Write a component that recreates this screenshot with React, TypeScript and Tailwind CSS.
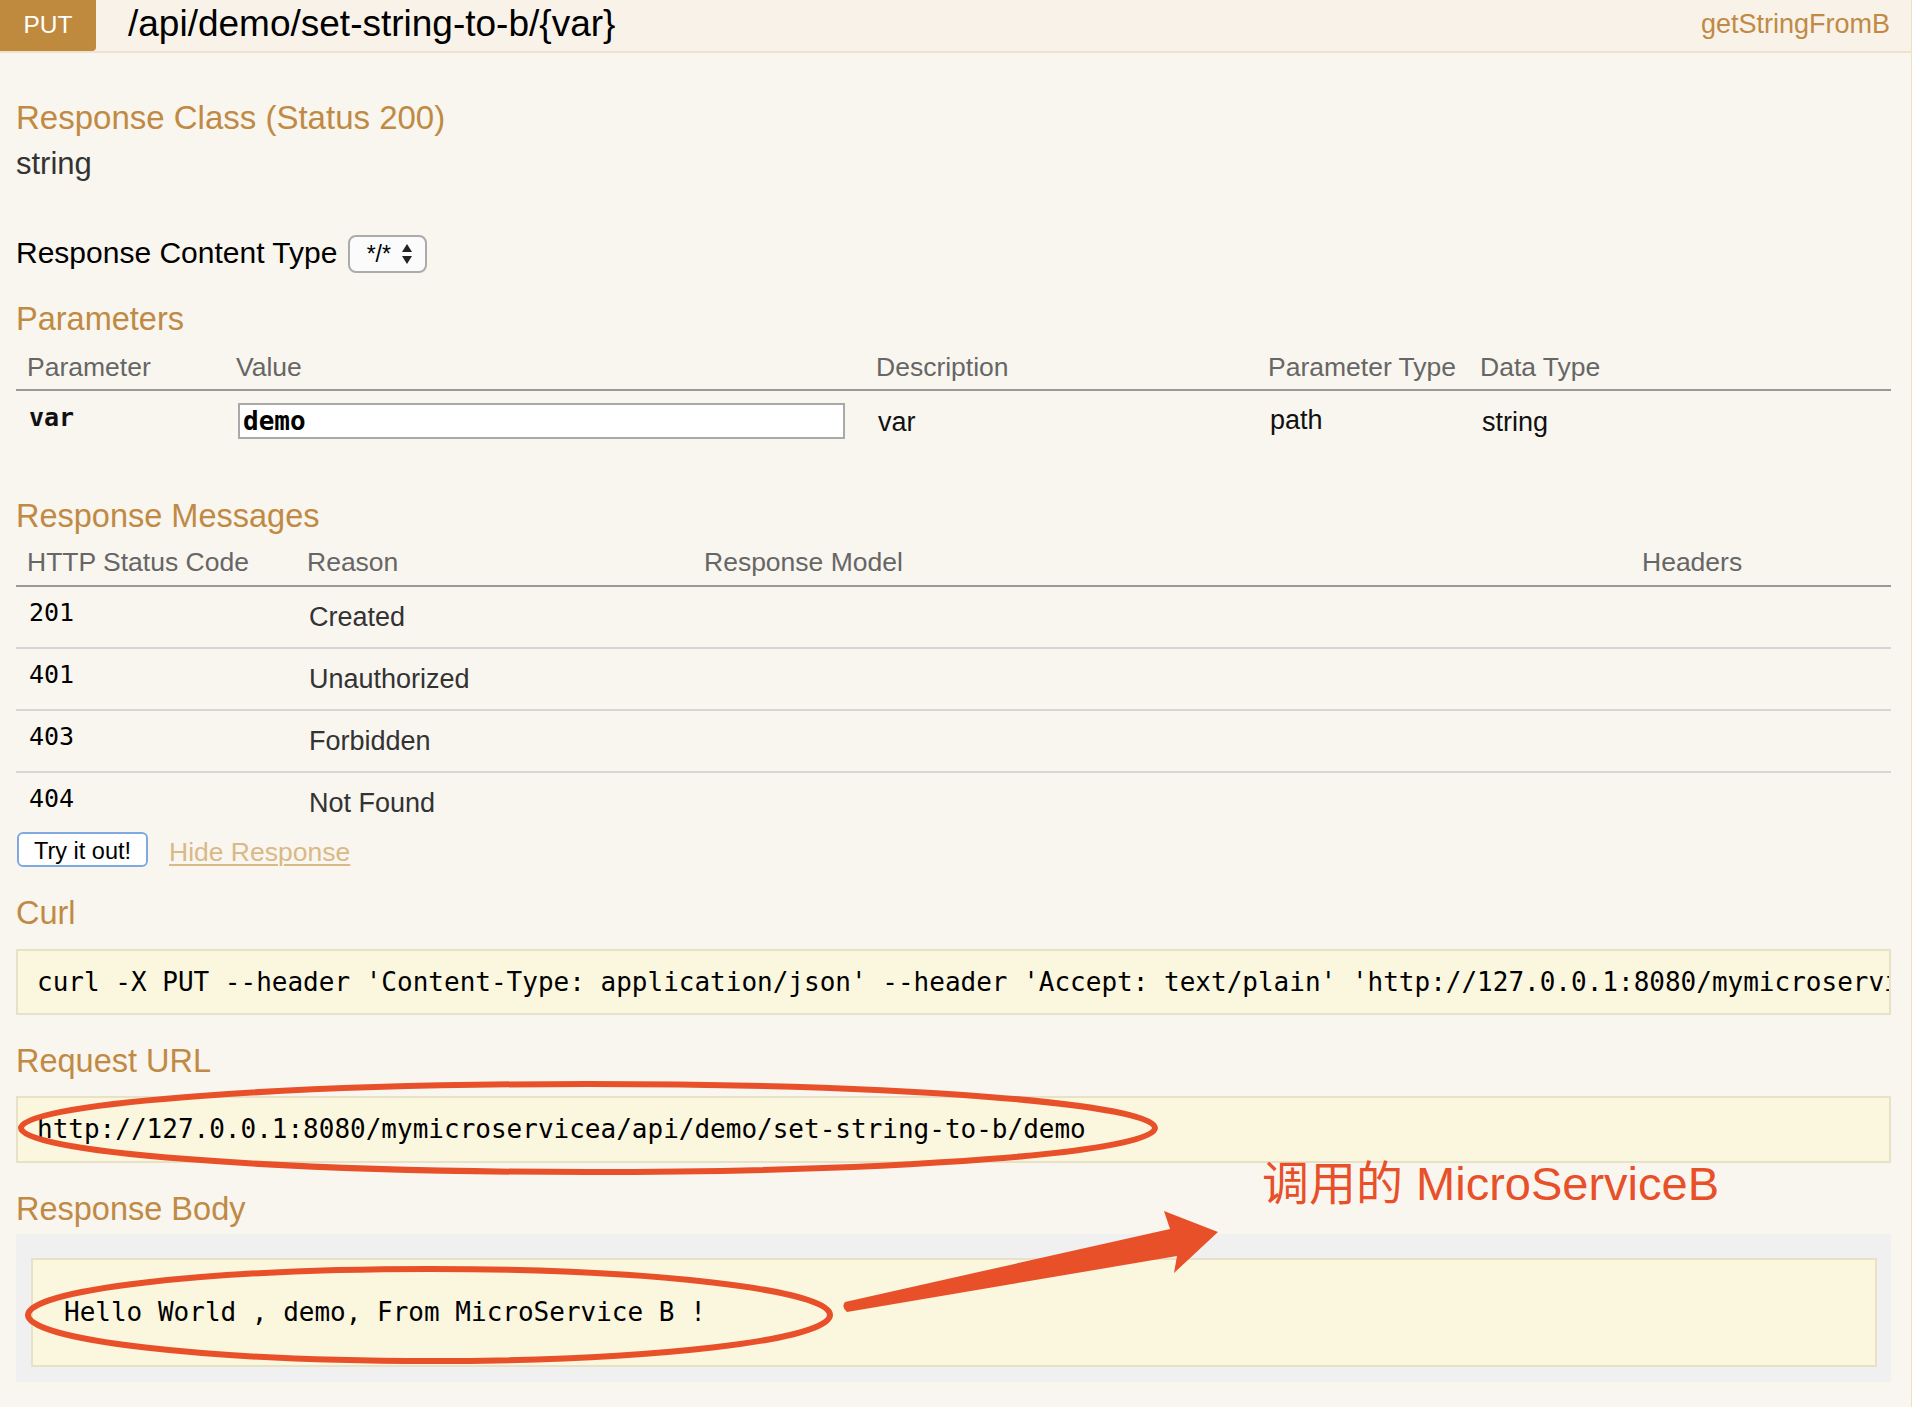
import type { ReactNode } from 'react'

function Heading({ children, className = '' }: { children: ReactNode; className?: string }) {
  return <h4 className={`h-10 text-[32.5px] leading-10 text-[#c08a45] ${className}`}>{children}</h4>
}

const paramCols = 'grid grid-cols-[209px_640px_392px_212px_1fr]'
const msgCols = 'grid grid-cols-[280px_397px_938px_1fr]'

const messages = [
  { code: '201', reason: 'Created' },
  { code: '401', reason: 'Unauthorized' },
  { code: '403', reason: 'Forbidden' },
  { code: '404', reason: 'Not Found' },
]

function SortArrows() {
  return (
    <svg width="12" height="24" viewBox="0 0 12 24" className="ml-[10px]">
      <path d="M6 2 L11 10 L1 10 Z" fill="#222" />
      <path d="M6 22 L11 14 L1 14 Z" fill="#222" />
    </svg>
  )
}

function Annotations() {
  return (
    <>
      <svg
        className="pointer-events-none absolute left-0 top-0"
        width="1912"
        height="1407"
        viewBox="0 0 1912 1407"
      >
        <ellipse cx="588" cy="1128" rx="567" ry="44" fill="none" stroke="#e8502a" strokeWidth="6" />
        <ellipse cx="429" cy="1315" rx="401" ry="46" fill="none" stroke="#e8502a" strokeWidth="6" />
        <path
          d="M845 1302 L1170 1229 L1164 1211 L1218 1232 L1174 1273 L1177 1256 L847 1312 Q841 1307 845 1302 Z"
          fill="#e8502a"
        />
      </svg>
      <div className="pointer-events-none absolute left-[1262px] top-[1160px] whitespace-nowrap text-[47px] leading-none text-[#e8502a]">
        调用的 MicroServiceB
      </div>
    </>
  )
}

export default function App() {
  return (
    <div className="min-h-screen bg-white font-['Liberation_Sans','Noto_Sans_CJK_SC',sans-serif]">
      <div className="relative w-[1912px] border-r border-[#f0e0ca] bg-[#f9f6ef] pb-[25px]">
        {/* operation heading */}
        <div className="flex h-[53px] items-start border-b-2 border-[#efe3d0] bg-[#f9f2e9]">
          <span className="flex h-[51px] w-[96px] items-center justify-center rounded-br-[4px] bg-[#c08a3e] pb-[1px] text-[24.5px] text-white">
            PUT
          </span>
          <span className="ml-[32px] flex h-[51px] items-center pb-[4px] text-[37px] text-black">
            /api/demo/set-string-to-b/{'{var}'}
          </span>
          <span className="ml-auto mr-[21px] flex h-[51px] items-center pb-[3px] text-[27px] text-[#c08a45]">
            getStringFromB
          </span>
        </div>

        <div className="pl-4 pr-5">
          <Heading className="mt-[45px] !text-[33px]">Response Class (Status 200)</Heading>
          <div className="mt-[8px] h-9 text-[31px] leading-9 text-[#333]">string</div>

          <div className="mt-[53px] flex h-[38px] items-center">
            <span className="-mt-[3px] text-[30px] text-black">Response Content Type</span>
            <div className="ml-[11px] flex h-[38px] w-[79px] items-center justify-center rounded-[8px] border-2 border-[#ababab] bg-[#fbfbfb] pl-1 text-[23px] text-black">
              */*
              <SortArrows />
            </div>
          </div>

          <Heading className="mt-[26px]">Parameters</Heading>
          <div className={`${paramCols} mt-3 border-b-2 border-[#999] pb-[6px] text-[26.5px] leading-8 text-[#666]`}>
            <div className="pl-[11px]">Parameter</div>
            <div className="pl-[11px]">Value</div>
            <div className="pl-[11px]">Description</div>
            <div className="pl-[11px]">Parameter Type</div>
            <div className="pl-[11px]">Data Type</div>
          </div>
          <div className={`${paramCols} pt-3 text-[27px] leading-[34px] text-[#111]`}>
            <div className="-mt-[2px] pl-[13px] font-['DejaVu_Sans_Mono',monospace] text-[25px] font-bold">var</div>
            <div className="pl-[13px]">
              <div className="h-9 w-[607px] border-2 border-[#a9a9a9] bg-white pl-[3px] font-['DejaVu_Sans_Mono',monospace] text-[26px] font-bold leading-8 text-black">
                demo
              </div>
            </div>
            <div className="pt-[2px] pl-[13px]">var</div>
            <div className="pl-[13px]">path</div>
            <div className="pt-[2px] pl-[13px]">string</div>
          </div>

          <Heading className="mt-[57px]">Response Messages</Heading>
          <div className={`${msgCols} mt-[10px] border-b-2 border-[#999] pb-[7px] text-[26.5px] leading-8 text-[#666]`}>
            <div className="pl-[11px]">HTTP Status Code</div>
            <div className="pl-[11px]">Reason</div>
            <div className="pl-[11px]">Response Model</div>
            <div className="pl-[11px]">Headers</div>
          </div>
          {messages.map((m, i) => (
            <div
              key={m.code}
              className={`${msgCols} ${i < messages.length - 1 ? 'h-[62px] border-b-2 border-[#d6d6d6]' : 'h-[59px]'}`}
            >
              <div className="pl-[13px] pt-[9px] font-['DejaVu_Sans_Mono',monospace] text-[25px] leading-[34px] text-black">
                {m.code}
              </div>
              <div className="pl-[13px] pt-[13px] text-[27px] leading-[34px] text-[#333]">{m.reason}</div>
              <div />
              <div />
            </div>
          ))}

          <div className="flex h-[35px] items-center">
            <button className="ml-px h-[35px] w-[131px] rounded-[6px] border-2 border-[#80a9e2] bg-white text-[23.5px] text-black">
              Try it out!
            </button>
            <a className="ml-[21px] mt-[6px] text-[26.5px] text-[#d8b987] underline decoration-2 underline-offset-[3px]">
              Hide Response
            </a>
          </div>

          <Heading className="mt-[26px]">Curl</Heading>
          <div className="mt-4 h-[66px] overflow-hidden whitespace-nowrap border-2 border-[#e7e1c8] bg-[#fbf6de] pl-[19px] font-['DejaVu_Sans_Mono',monospace] text-[26px] leading-[62px] text-black">
            curl -X PUT --header 'Content-Type: application/json' --header 'Accept: text/plain'
            'http://127.0.0.1:8080/mymicroservicea/api/demo/set-string-to-b/demo'
          </div>

          <Heading className="mt-[26px]">Request URL</Heading>
          <div className="mt-[15px] h-[67px] overflow-hidden whitespace-nowrap border-2 border-[#e7e1c8] bg-[#fbf6de] pl-[19px] font-['DejaVu_Sans_Mono',monospace] text-[26px] leading-[62px] text-black">
            http://127.0.0.1:8080/mymicroservicea/api/demo/set-string-to-b/demo
          </div>

          <Heading className="mt-[26px]">Response Body</Heading>
          <div className="mt-[5px] h-[148px] bg-[#f0f0f0] pb-[15px] pl-[15px] pr-[14px] pt-6">
            <div className="h-[109px] border-2 border-[#e7e1c8] bg-[#fbf6de] pl-[31px] font-['DejaVu_Sans_Mono',monospace] text-[26px] leading-[105px] text-black">
              Hello World , demo, From MicroService B !
            </div>
          </div>
        </div>

        <Annotations />
      </div>
    </div>
  )
}
